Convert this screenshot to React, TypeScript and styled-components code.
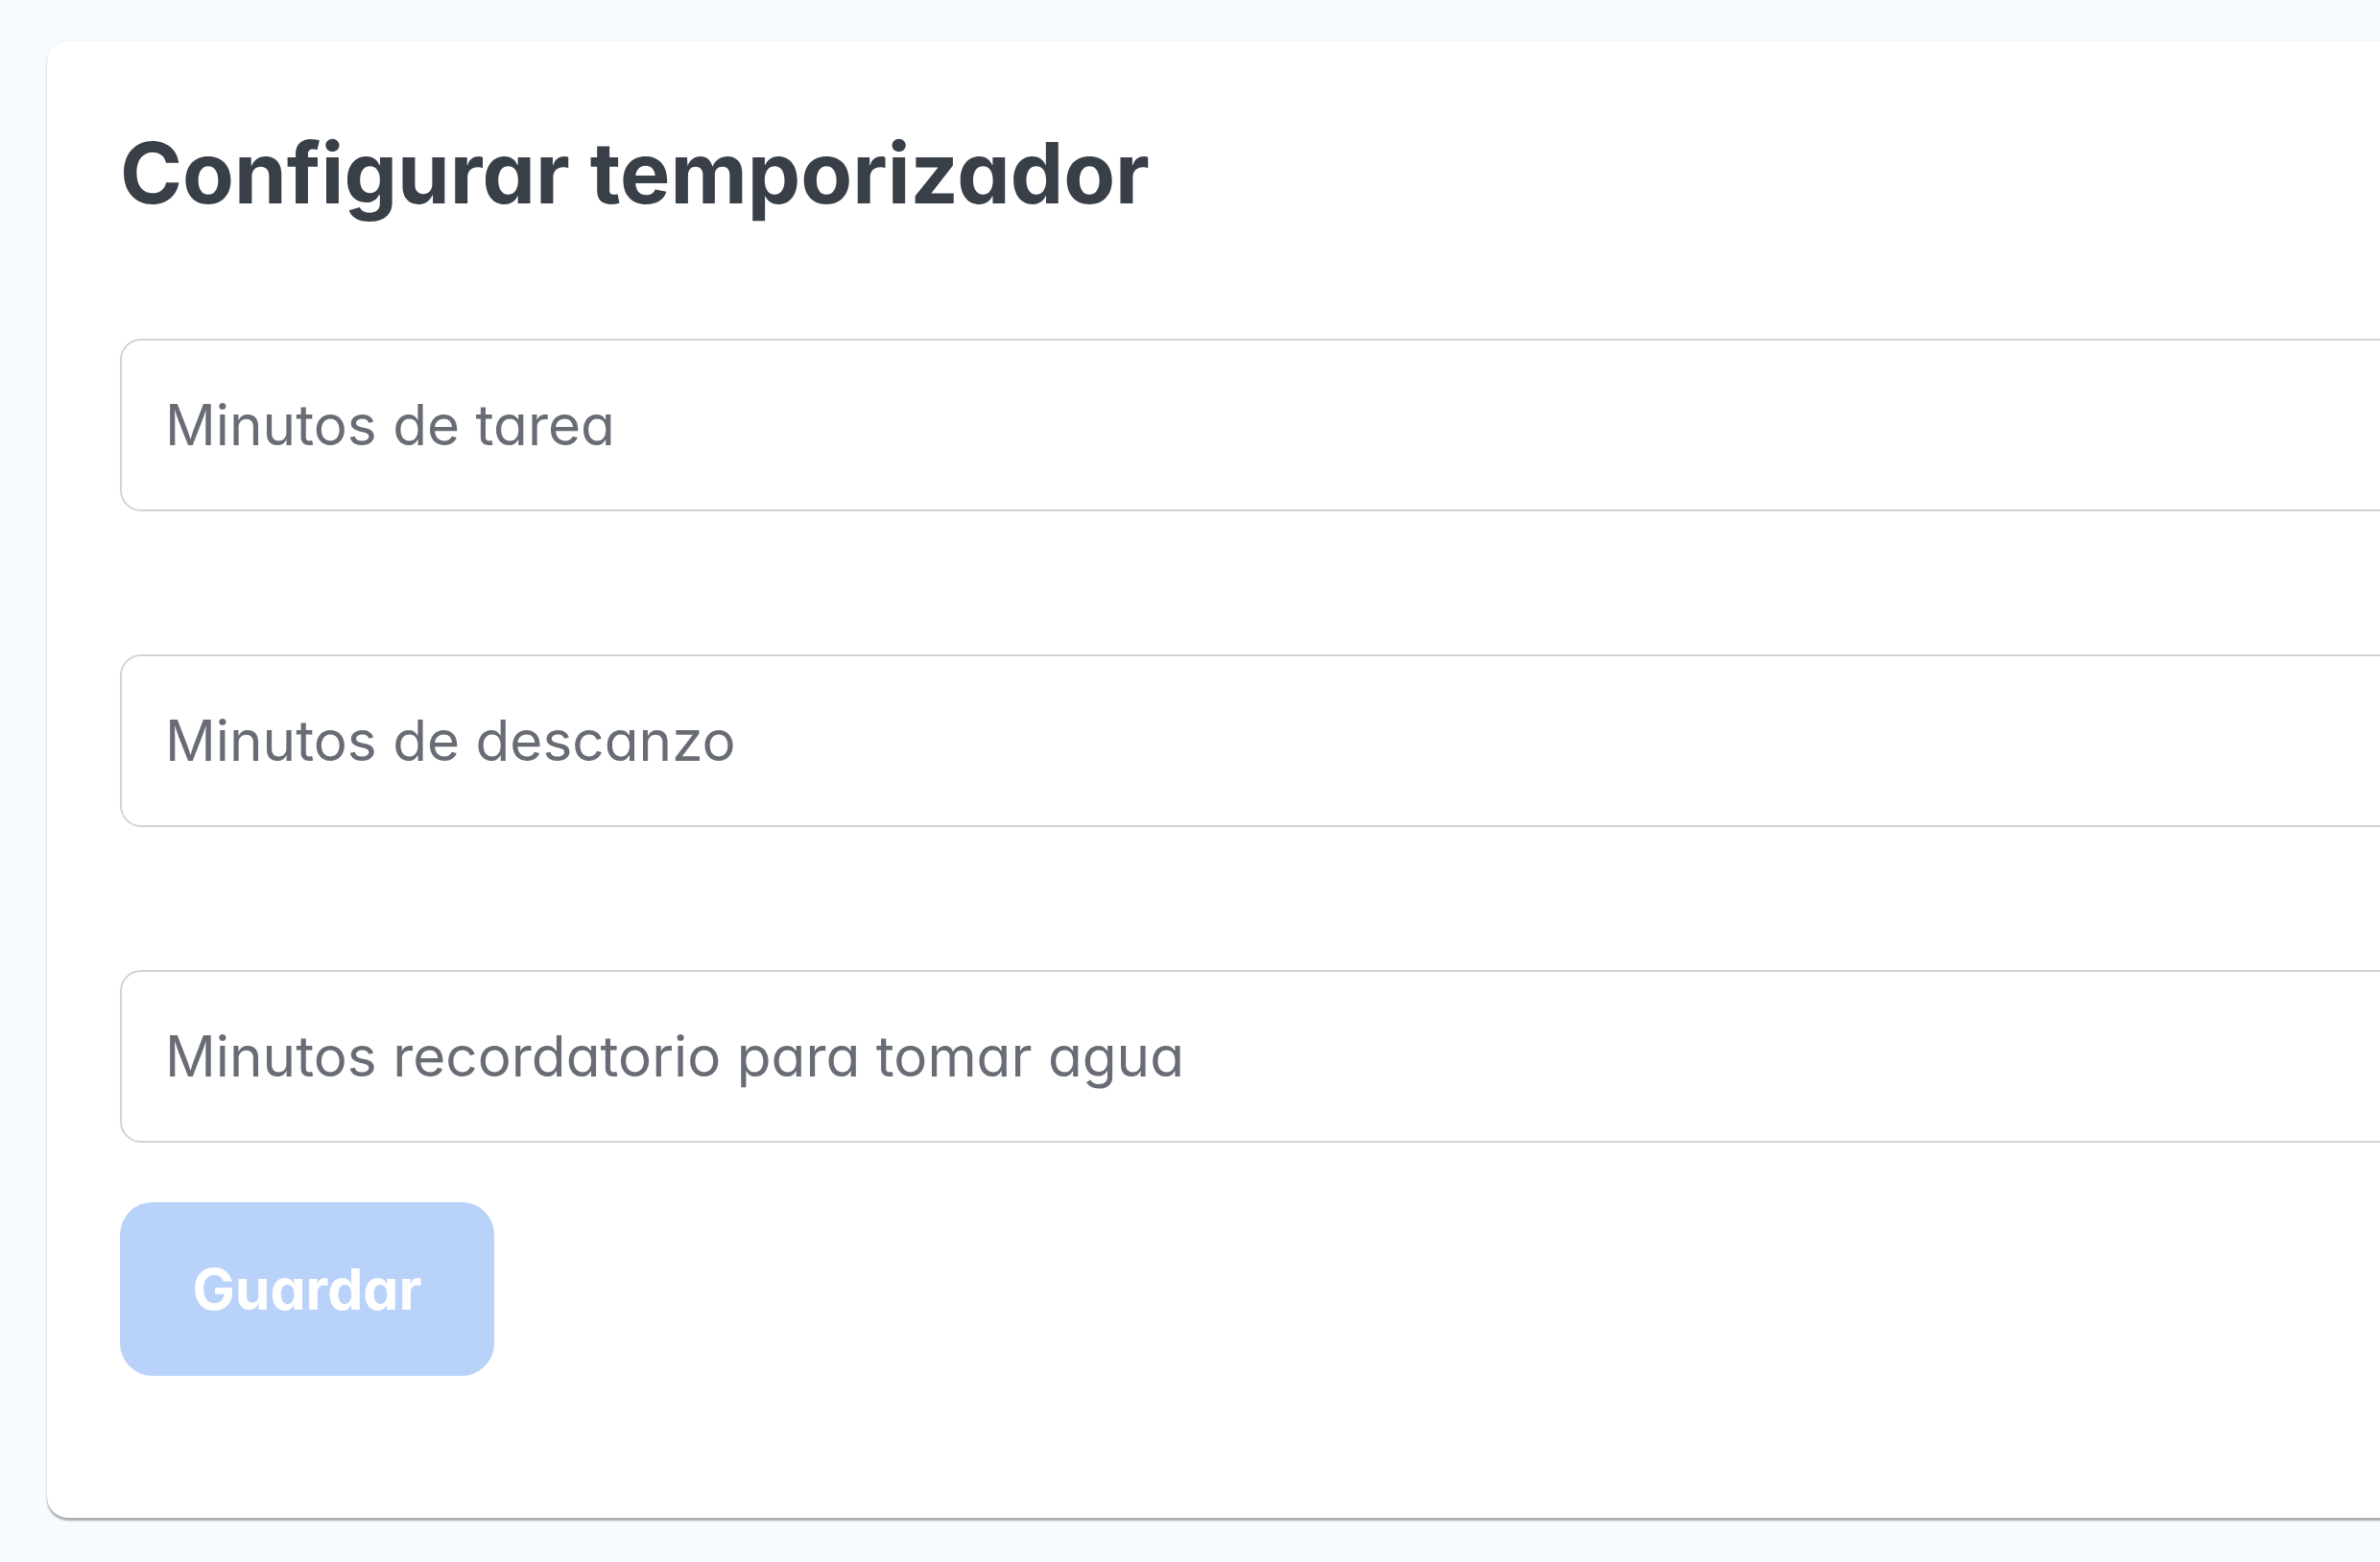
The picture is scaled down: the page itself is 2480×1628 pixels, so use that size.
import React from "react";
import styled, { createGlobalStyle } from "styled-components";

const GlobalStyle = createGlobalStyle`
  html, body {
    margin: 0;
    padding: 0;
    overflow: hidden;
    background: #f7fbfe;
  }
  body {
    font-family: Inter, "Noto Sans", "Liberation Sans", sans-serif;
    font-feature-settings: "cv11";
  }
  * { box-sizing: border-box; }
`;

const Page = styled.main`
  min-height: 1628px;
  padding: 43px 0 0 49px;
  background: #f7fbfe;
`;

const Card = styled.section`
  width: 2600px;
  background: #ffffff;
  border-radius: 22px;
  padding: 85px 76px 148px 76px;
  box-shadow: 0 0 3px rgba(0, 0, 0, 0.07), 0 3px 2px rgba(0, 0, 0, 0.3);
`;

const Title = styled.h1`
  margin: 0 0 119px 0;
  font-family: Inter, "Noto Sans", sans-serif;
  font-weight: 700;
  font-size: 88px;
  line-height: 1.2;
  color: #393f47;
  letter-spacing: 0;
`;

const Form = styled.form`
  display: flex;
  flex-direction: column;
  align-items: flex-start;
`;

const Fields = styled.div`
  display: flex;
  flex-direction: column;
  gap: 149px;
  width: 100%;
`;

const Input = styled.input`
  width: 100%;
  height: 180px;
  border: 2px solid #cfd4da;
  border-radius: 22px;
  background: #ffffff;
  padding: 0 45px;
  font-family: Inter, "Noto Sans", sans-serif;
  font-feature-settings: "cv11";
  font-size: 58.5px;
  color: #393f47;
  outline: none;

  &::placeholder {
    color: #686d75;
    opacity: 1;
  }
`;

const SaveButton = styled.button`
  margin-top: 62px;
  width: 390px;
  height: 181px;
  border: none;
  border-radius: 34px;
  background: #b9d2fa;
  color: #ffffff;
  font-family: Inter, "Noto Sans", sans-serif;
  font-feature-settings: "cv11";
  font-weight: 700;
  font-size: 59px;
  cursor: not-allowed;
`;

const fields = [
  "Minutos de tarea",
  "Minutos de descanzo",
  "Minutos recordatorio para tomar agua",
];

export default function App() {
  return (
    <>
      <GlobalStyle />
      <Page>
        <Card>
          <Title>Configurar temporizador</Title>
          <Form onSubmit={(e) => e.preventDefault()}>
            <Fields>
              {fields.map((f) => (
                <Input key={f} type="number" placeholder={f} />
              ))}
            </Fields>
            <SaveButton type="submit" disabled>
              Guardar
            </SaveButton>
          </Form>
        </Card>
      </Page>
    </>
  );
}
